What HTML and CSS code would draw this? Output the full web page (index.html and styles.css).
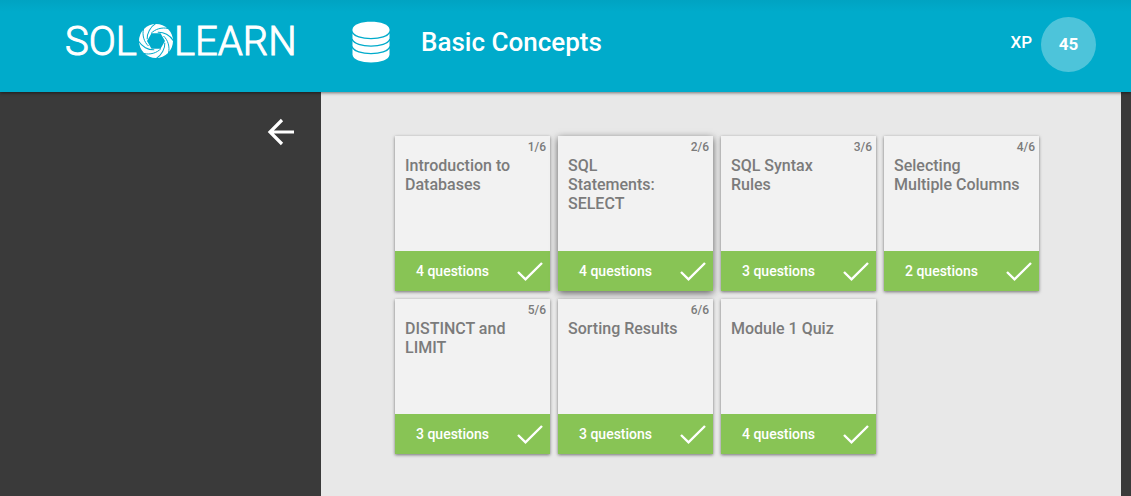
FILE: index.html
```
<!DOCTYPE html>
<html lang="en">
<head>
<meta charset="utf-8">
<title>Basic Concepts</title>
<link rel="stylesheet" href="styles.css">
</head>
<body>
<svg width="0" height="0" class="defs" aria-hidden="true">
  <symbol id="check" viewBox="0 0 26 20"><path d="M1 11 8.500 18.300 25 2" fill="none" stroke="#fff" stroke-width="2.400"/></symbol>
</svg>
<header class="topbar">
  <a class="logo" href="#" aria-label="SoloLearn">
    <span>SOL</span>
    <svg class="swirl" viewBox="-18 -18 36 36" aria-hidden="true">
      <defs><path id="cut" d="M-5 -7.500C-1 -12 6 -14 12 -12.500"/></defs>
      <path fill="#fff" fill-rule="evenodd" d="M-17 0A17 17 0 1 1 17 0A17 17 0 1 1 -17 0ZM-4.500 -7.800 4.500 -7.800 9 0 4.500 7.800 -4.500 7.800 -9 0Z"/>
      <g fill="none" stroke="#00abcb" stroke-width="1">
        <use href="#cut"/><use href="#cut" transform="rotate(45)"/><use href="#cut" transform="rotate(90)"/><use href="#cut" transform="rotate(135)"/><use href="#cut" transform="rotate(180)"/><use href="#cut" transform="rotate(225)"/><use href="#cut" transform="rotate(270)"/><use href="#cut" transform="rotate(315)"/>
      </g>
    </svg>
    <span>LEARN</span>
  </a>
  <svg class="db" viewBox="0 0 38 42" aria-hidden="true">
    <path fill="#fff" d="M.5 8.500C.5-2 37.500-2 37.500 8.500V33.500C37.500 44 .5 44 .5 33.500Z"/>
    <path fill="none" stroke="#00abcb" stroke-width="1.400" d="M0 10.500C3 20 35 20 38 10.500M0 18C3 27.500 35 27.500 38 18M0 25.500C3 35 35 35 38 25.500"/>
  </svg>
  <h1 class="title">Basic Concepts</h1>
  <div class="xp"><span>XP</span><span class="score">45</span></div>
</header>
<div class="body">
  <nav class="side">
    <a class="back" href="#" aria-label="Back"><svg viewBox="0 0 28 28" width="28" height="28"><path d="M27 14H3.500M15 2 3 14 15 26" fill="none" stroke="#fff" stroke-width="3.200"/></svg></a>
  </nav>
  <main class="content">
    <div class="cards">
      <a class="card" href="#"><span class="step">1/6</span><h2>Introduction to Databases</h2><span class="foot">4 questions<svg><use href="#check"/></svg></span></a>
      <a class="card raised" href="#"><span class="step">2/6</span><h2>SQL<br>Statements: SELECT</h2><span class="foot">4 questions<svg><use href="#check"/></svg></span></a>
      <a class="card" href="#"><span class="step">3/6</span><h2>SQL Syntax<br>Rules</h2><span class="foot">3 questions<svg><use href="#check"/></svg></span></a>
      <a class="card" href="#"><span class="step">4/6</span><h2>Selecting<br>Multiple Columns</h2><span class="foot">2 questions<svg><use href="#check"/></svg></span></a>
      <a class="card" href="#"><span class="step">5/6</span><h2>DISTINCT and LIMIT</h2><span class="foot">3 questions<svg><use href="#check"/></svg></span></a>
      <a class="card" href="#"><span class="step">6/6</span><h2>Sorting Results</h2><span class="foot">3 questions<svg><use href="#check"/></svg></span></a>
      <a class="card" href="#"><span class="step"></span><h2>Module 1 Quiz</h2><span class="foot">4 questions<svg><use href="#check"/></svg></span></a>
    </div>
  </main>
</div>
</body>
</html>
```
FILE: styles.css
```
* { box-sizing: border-box; }
body {
  margin: 0;
  min-height: 100vh;
  display: flex;
  flex-direction: column;
  background: #3a3a3a;
  font-family: Roboto, sans-serif;
}
a { color: inherit; text-decoration: none; }
h1, h2 { margin: 0; font-weight: 500; }
svg { display: block; flex: none; }
.defs { position: absolute; }
.topbar {
  position: relative;
  display: flex;
  align-items: center;
  height: 92px;
  padding: 0 35px 8px 65px;
  background: linear-gradient(#00a3c2, #00abcb 12px);
  box-shadow: 0 1px 3px rgba(0, 0, 0, .5);
  color: #fff;
}
.logo {
  display: flex;
  align-items: center;
  width: 287px;
  font-size: 40px;
  line-height: 48px;
  font-weight: 300;
  -webkit-text-stroke: 1px #fff;
}
.swirl { width: 36px; height: 36px; margin: 0 0 2px 1px; }
.db { width: 38px; height: 42px; }
.title {
  margin-left: 31px;
  font-size: 26px;
  line-height: 32px;
}
.xp {
  display: flex;
  align-items: center;
  gap: 9px;
  margin-left: auto;
  font-size: 17px;
  font-weight: 500;
}
.score {
  display: grid;
  place-items: center;
  width: 55px;
  height: 55px;
  margin-top: 4px;
  border-radius: 50%;
  background: #4dc4da;
  font-weight: 700;
}
.body { flex: 1; display: flex; }
.side {
  width: 321px;
  padding: 26px;
  flex: none;
}
.back { display: block; width: 28px; margin-left: auto; }
.content {
  flex: 1;
  margin-right: 10px;
  padding: 44px 74px;
  background: #e8e8e8;
}
.cards {
  display: grid;
  grid-template-columns: repeat(auto-fill, 155px);
  gap: 8px;
}
.card {
  display: flex;
  flex-direction: column;
  height: 155px;
  background: #f2f2f2;
  box-shadow: 0 1px 3px rgba(0, 0, 0, .5);
  color: #7b7b7b;
}
.raised { box-shadow: 0 2px 7px rgba(0, 0, 0, .6); }
.step {
  height: 20px;
  padding: 3px 4px 0;
  font-size: 12px;
  font-weight: 500;
  line-height: 16px;
  text-align: right;
}
.card h2 {
  padding: 0 10px;
  font-size: 16px;
  line-height: 19px;
}
.foot {
  display: flex;
  align-items: center;
  justify-content: space-between;
  height: 40px;
  margin-top: auto;
  padding: 0 7px 0 21px;
  background: #88c455;
  color: #fff;
  font-size: 14px;
  font-weight: 500;
}
.foot svg { width: 26px; height: 20px; }
```
